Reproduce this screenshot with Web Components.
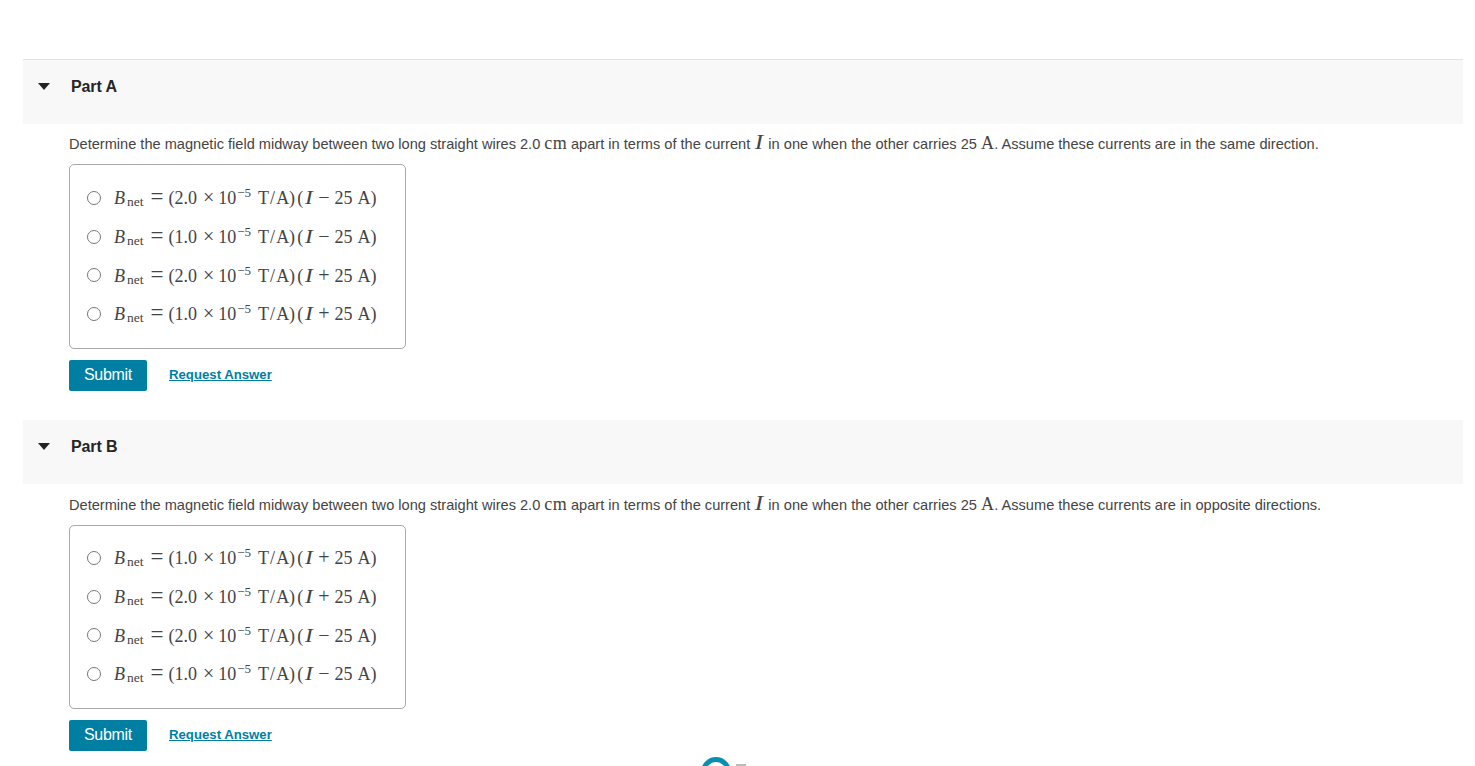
<!DOCTYPE html>
<html>
<head>
<meta charset="utf-8">
<title>Parts</title>
<style>
html, body { margin: 0; height: 766px; overflow: hidden; background: #fff; }
body { font-family: "Liberation Sans", Arial, sans-serif; color: #333; }
#page { padding: 59px 12px 0 23px; }
</style>
</head>
<body>
<div id="page">
    <quiz-part name="Part A" ending="the same direction" order="2-,1-,2+,1+" first></quiz-part>
    <quiz-part name="Part B" ending="opposite directions" order="1+,2+,2-,1-"></quiz-part>
    <loading-mark></loading-mark>
</div>
<script>
//Formula de cada opcion
class netField extends HTMLElement{
    constructor(){
        super();
        this.attachShadow({mode: "open"});
    }

    connectedCallback(){
        const coef = this.getAttribute('coef');
        const sign = this.getAttribute('sign') === '+' ? '+' : '\u2212';
        this.shadowRoot.innerHTML = `
            <style>
                :host{
                    display: inline-block;
                    font-family: "Liberation Serif", "Times New Roman", serif;
                    font-size: 18px;
                    line-height: 24px;
                    color: #444;
                    white-space: nowrap;
                }
                i{ font-style: italic; }
                .b{ margin-right: 2px; }
                sub{
                    font-size: 13.5px;
                    line-height: 0;
                    vertical-align: -2px;
                }
                sup{
                    font-size: 13px;
                    line-height: 0;
                    vertical-align: 7px;
                    margin-left: 1px;
                    margin-right: 7px;
                }
                .eq{
                    font-size: 23px;
                    line-height: 0;
                    margin: 0 5px 0 7px;
                }
                .times{
                    font-size: 20px;
                    line-height: 0;
                    margin: 0 4px 0 6px;
                }
                .slash{ margin: 0 1px; }
                .open{ margin-left: 2px; }
                .i{
                    display: inline-block;
                    width: 12px;
                    text-align: center;
                    transform: scaleX(1.3);
                }
                .sign{
                    display: inline-block;
                    width: 11.3px;
                    text-align: center;
                    font-size: 20px;
                    line-height: 0;
                    margin: 0 5px 0 3px;
                }
                .unit{ margin-left: 5px; }
            </style>
            <i class="b">B</i><sub>net</sub><span class="eq">=</span>(${coef}<span class="times">×</span>10<sup>−5</sup>T<span class="slash">/</span>A)<span class="open">(</span><i class="i">I</i><span class="sign">${sign}</span>25<span class="unit">A)</span>
        `;
    }
}
customElements.define("net-field", netField);

//Una fila con su radio
class answerOption extends HTMLElement{
    constructor(){
        super();
        this.attachShadow({mode: "open"});
        this.shadowRoot.innerHTML = `
            <style>
                :host{
                    display: flex;
                    align-items: center;
                    height: 38.7px;
                }
                .radio{
                    box-sizing: border-box;
                    width: 14px;
                    height: 14px;
                    border: 1.4px solid #777;
                    border-radius: 50%;
                    background: #fff;
                    margin: -1px 13px 0 0;
                    flex: none;
                }
            </style>
            <span class="radio"></span><slot></slot>
        `;
    }
}
customElements.define("answer-option", answerOption);

//Parte completa: cabecera, enunciado, opciones y botones
class quizPart extends HTMLElement{
    constructor(){
        super();
        this.attachShadow({mode: "open"});
    }

    getOptions(){
        return this.getAttribute('order').split(',').map(item => `
            <answer-option><net-field coef="${item[0]}.0" sign="${item[1]}"></net-field></answer-option>
        `).join('');
    }

    connectedCallback(){
        const name = this.getAttribute('name');
        const ending = this.getAttribute('ending');
        this.shadowRoot.innerHTML = `
            <style>
                :host{
                    display: block;
                    margin-bottom: 29px;
                }
                :host([first]){
                    border-top: 1px solid #e2e2e2;
                }
                header{
                    display: flex;
                    align-items: center;
                    height: 64px;
                    padding-bottom: 11px;
                    box-sizing: border-box;
                    background: #f8f8f8;
                    font-size: 16px;
                    font-weight: bold;
                    letter-spacing: -0.1px;
                    color: #262626;
                }
                header svg{
                    margin: 0 21px 0 15px;
                }
                .body{
                    padding-left: 46px;
                }
                p{
                    margin: 0;
                    height: 41px;
                    padding-top: 11px;
                    box-sizing: border-box;
                    font-size: 14.6px;
                    line-height: 20px;
                    color: #444;
                    white-space: nowrap;
                }
                :host([first]) p{
                    height: 40px;
                    padding-top: 10px;
                }
                .m{
                    font-family: "Liberation Serif", serif;
                    font-size: 18px;
                    line-height: 0;
                    letter-spacing: 0.3px;
                }
                .i{
                    display: inline-block;
                    width: 10px;
                    text-align: center;
                    font-size: 20px;
                    font-style: italic;
                    transform: scaleX(1.25);
                }
                .box{
                    box-sizing: border-box;
                    width: 337px;
                    height: 184px;
                    border: 1px solid #a9a9a9;
                    border-radius: 5px;
                    padding: 13px 17px;
                    margin-bottom: 11px;
                }
                :host([first]) .box{
                    height: 185px;
                    padding-top: 14px;
                }
                .actions{
                    display: flex;
                    align-items: center;
                    gap: 22px;
                }
                button{
                    width: 78px;
                    height: 31px;
                    padding: 0 0 2px;
                    border: 0;
                    border-radius: 2px;
                    background: #007fa3;
                    color: #fff;
                    font: 16px "Liberation Sans", Arial, sans-serif;
                    letter-spacing: -0.3px;
                }
                a{
                    margin-top: -2px;
                    font-size: 13.2px;
                    font-weight: bold;
                    color: #007fa3;
                    text-decoration: underline;
                }
            </style>
            <header>
                <svg width="12" height="7" viewBox="0 0 12 7"><path d="M0.5 0H11.5Q12 0 11.6 0.5L6.4 6.6Q6 7 5.6 6.6L0.4 0.5Q0 0 0.5 0Z" fill="#222"/></svg>
                <span>${name}</span>
            </header>
            <div class="body">
                <p>Determine the magnetic field midway between two long straight wires 2.0 <span class="m">cm</span> apart in terms of the current <span class="m i">I</span> in one when the other carries 25 <span class="m">A</span>. Assume these currents are in ${ending}.</p>
                <div class="box">${this.getOptions()}</div>
                <div class="actions">
                    <button>Submit</button>
                    <a href="#">Request Answer</a>
                </div>
            </div>
        `;
    }
}
customElements.define("quiz-part", quizPart);

//Marca cortada al pie de la pagina
class loadingMark extends HTMLElement{
    constructor(){
        super();
        this.attachShadow({mode: "open"});
        this.shadowRoot.innerHTML = `
            <style>
                :host{
                    display: flex;
                    justify-content: center;
                    gap: 5px;
                    margin-top: -23px;
                    padding-right: 39px;
                }
                .ring{
                    box-sizing: border-box;
                    width: 30px;
                    height: 30px;
                    border: 5px solid #0a8fb0;
                    border-radius: 50%;
                }
                .bar{
                    width: 10px;
                    height: 3px;
                    margin-top: 7px;
                    background: #bbb;
                }
            </style>
            <div class="ring"></div><div class="bar"></div>
        `;
    }
}
customElements.define("loading-mark", loadingMark);
</script>
</body>
</html>
